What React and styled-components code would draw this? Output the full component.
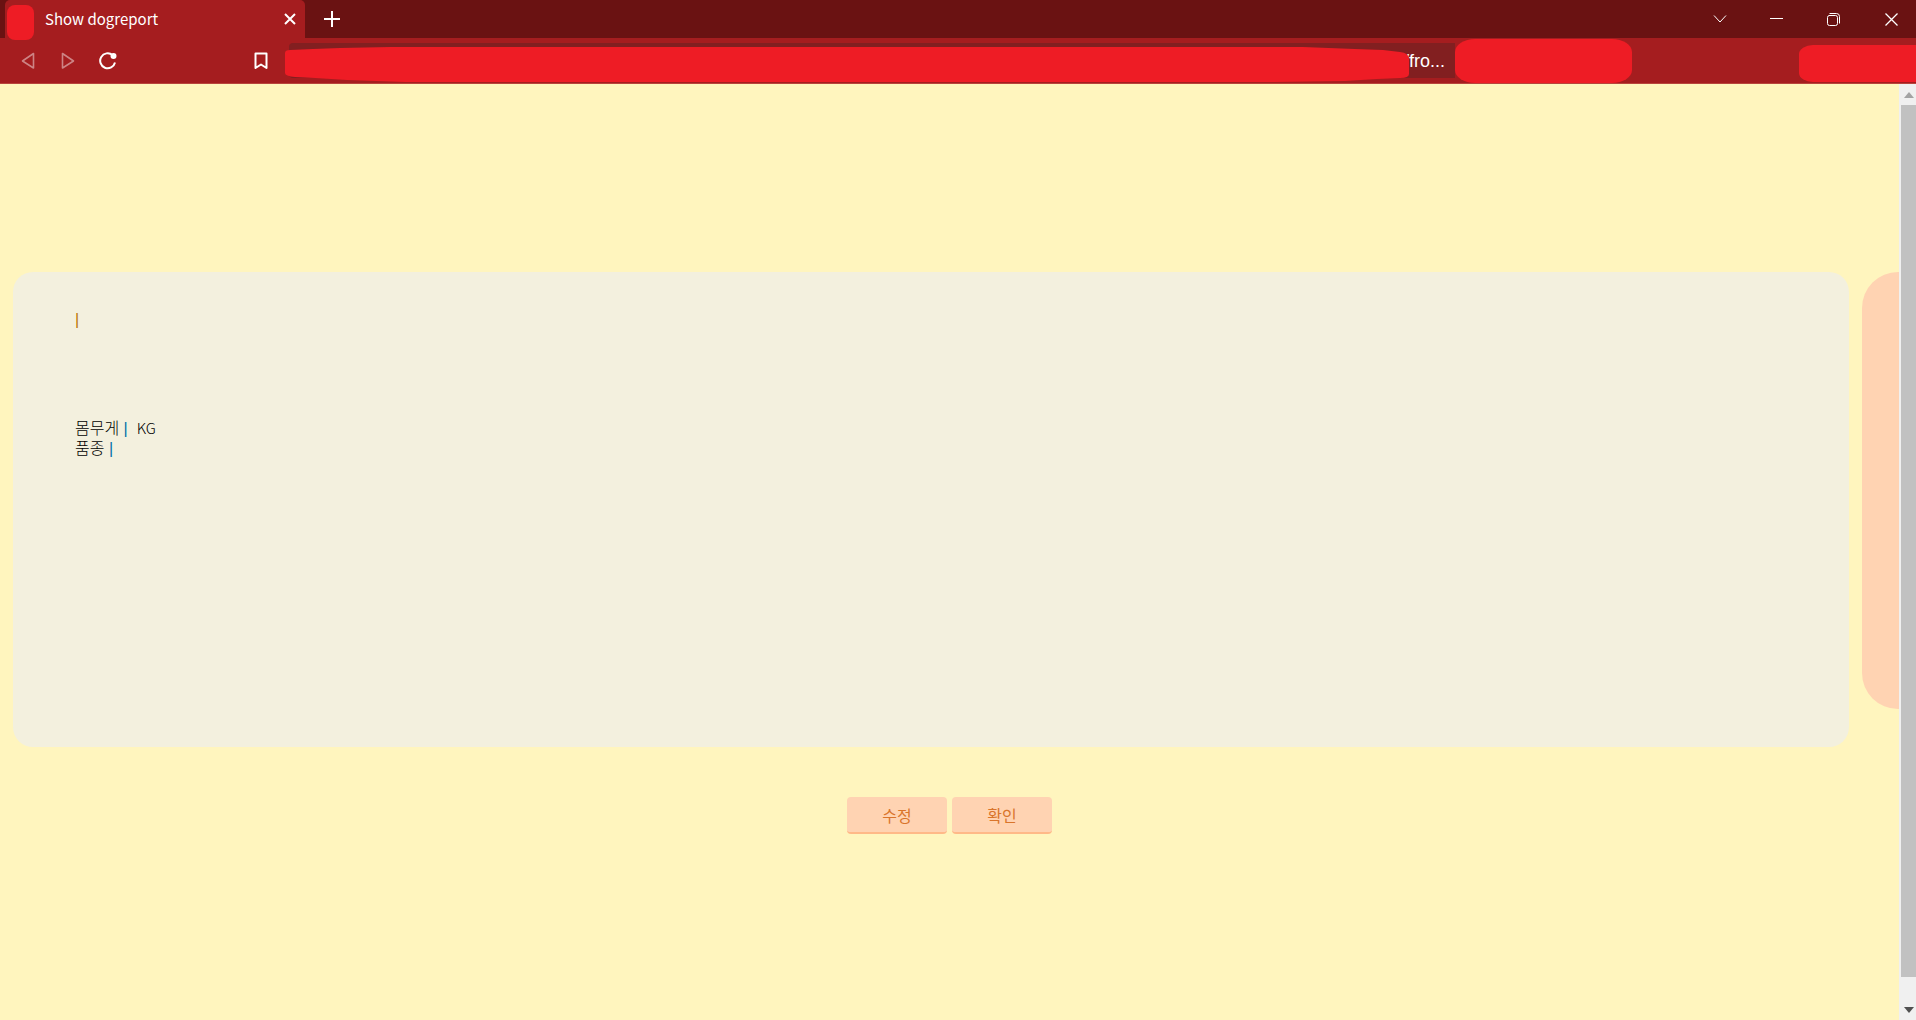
import React from "react";
import styled, { createGlobalStyle } from "styled-components";

const GlobalStyle = createGlobalStyle`
  * { box-sizing: border-box; }
  body { margin: 0; overflow: hidden; font-family: "Noto Sans CJK KR", "Noto Sans", sans-serif; }
  button { font: inherit; border: 0; padding: 0; background: none; color: inherit; cursor: pointer; }
`;

const Window = styled.div`
  display: flex;
  flex-direction: column;
  height: 100vh;
  background: #fff5be;
`;

const TitleBar = styled.header`
  display: flex;
  flex: none;
  height: 38px;
  padding-left: 5px;
  background: #6a1212;
  color: #fff;
`;

const Tab = styled.div`
  position: relative;
  display: flex;
  align-items: center;
  justify-content: space-between;
  width: 300px;
  padding: 0 5px 1px 40px;
  border-radius: 5px 5px 0 0;
  background: #a51d1f;
`;

const TabIcon = styled.span`
  position: absolute;
  z-index: 2;
  left: 2px;
  top: 5px;
  width: 27px;
  height: 35px;
  border-radius: 8px;
  background: #ee1c25;
`;

const TabTitle = styled.span`
  font-size: 15px;
  line-height: 20px;
`;

const IconButton = styled.button`
  display: flex;
  align-items: center;
  justify-content: center;
  flex: none;
  width: ${(p) => p.$width}px;
  height: 38px;
  opacity: ${(p) => (p.$dim ? 0.45 : 1)};
`;

const WindowControls = styled.div`
  display: flex;
  margin-left: auto;
`;

const Toolbar = styled.nav`
  display: flex;
  align-items: center;
  flex: none;
  height: 46px;
  padding-left: 8px;
  border-bottom: 1px solid #b8443c;
  background: #a51d1f;
  color: #fff;
`;

const BookmarkSlot = styled.div`
  margin-left: 112px;
  margin-right: 8px;
`;

const Address = styled.div`
  position: relative;
  display: flex;
  flex: 1;
  align-items: center;
  justify-content: flex-end;
  height: 35px;
  padding-right: 10px;
  border-radius: 4px 0 0 4px;
  background: #821f20;
  font-family: "Liberation Sans", sans-serif;
  font-size: 18px;
  line-height: 24px;
`;

const Scribble = styled.svg`
  position: absolute;
  left: -4px;
  top: 4px;
  width: calc(100% - 42px);
  height: 35px;
`;

const Masked = styled.span`
  flex: none;
  align-self: ${(p) => (p.$low ? "flex-end" : "flex-start")};
  width: ${(p) => p.$width}px;
  height: ${(p) => p.$height}px;
  margin: 1px 0 1px ${(p) => p.$gap || 0}px;
  border-radius: ${(p) => p.$radius};
  background: #ee1c25;
`;

const Viewport = styled.div`
  display: flex;
  flex: 1;
  min-height: 0;
`;

const Page = styled.main`
  flex: 1;
  min-width: 0;
  overflow: hidden;
  padding-top: 188px;
`;

const Panels = styled.div`
  display: flex;
  align-items: flex-start;
  gap: 13px;
  padding-left: 13px;
`;

const Card = styled.section`
  flex: 0 0 calc(100% - 50px);
  min-height: 475px;
  padding: 38px 62px;
  border-radius: 20px;
  background: #f3f0de;
  color: #000;
  font-family: "Liberation Sans", "Noto Sans CJK KR", sans-serif;
  font-size: 16px;
  font-weight: 300;
  line-height: 20px;
`;

const NextCard = styled.aside`
  flex: 1;
  height: 437px;
  border-radius: 36px 0 0 36px;
  background: #ffd3b2;
`;

const Name = styled.h1`
  margin: 0 0 88px;
  color: #b87400;
  font-size: 16px;
  font-weight: 400;
  line-height: 20px;
`;

const Field = styled.p`
  margin: 0;
  white-space: pre;
`;

const Bar = styled.span`
  color: #0070a8;
`;

const Unit = styled.span`
  font-family: "Noto Sans CJK KR", sans-serif;
  font-size: 15px;
`;

const Actions = styled.div`
  display: flex;
  justify-content: center;
  gap: 5px;
  margin-top: 50px;
`;

const ActionButton = styled.button`
  && {
    width: 100px;
    height: 37px;
    border-bottom: 2px solid #ffb988;
    border-radius: 4px;
    background: #ffd3b2;
    color: #d9752b;
    font-size: 16px;
    line-height: 20px;
  }
`;

const Scrollbar = styled.div`
  display: flex;
  flex: none;
  flex-direction: column;
  width: 17px;
  padding-left: 2px;
  background: #f0f0f0;
`;

const ScrollArrow = styled.button`
  && {
    display: flex;
    align-items: center;
    justify-content: center;
    flex: none;
    height: 21px;
    padding-left: 1px;
    color: ${(p) => (p.$active ? "#505050" : "#a3a3a3")};
  }
`;

const Thumb = styled.div`
  flex: 1;
  margin-bottom: 22px;
  background: #c1c1c1;
`;

const Icon = ({ w, h, d, stroke = 1, fill = "none", children }) => (
  <svg width={w} height={h} viewBox={`0 0 ${w} ${h}`} fill={fill} stroke="currentColor" strokeWidth={stroke} aria-hidden="true">
    <path d={d} strokeLinejoin="round" />
    {children}
  </svg>
);

export default function App() {
  return (
    <Window>
      <GlobalStyle />
      <TitleBar>
        <Tab>
          <TabIcon />
          <TabTitle>Show dogreport</TabTitle>
          <IconButton $width={20} aria-label="Close tab">
            <Icon w={12} h={12} stroke={2} d="M1 1L11 11M11 1L1 11" />
          </IconButton>
        </Tab>
        <IconButton $width={54} aria-label="New tab">
          <Icon w={16} h={16} stroke={2} d="M8 0V16M0 8H16" />
        </IconButton>
        <WindowControls>
          <IconButton $width={67} aria-label="Tab list">
            <Icon w={14} h={8} d="M1 .5L7 7L13 .5" />
          </IconButton>
          <IconButton $width={47} aria-label="Minimize">
            <Icon w={13} h={2} d="M0 .5H13" />
          </IconButton>
          <IconButton $width={67} aria-label="Restore">
            <Icon w={13} h={13} d="M2 2.500H8.500Q10.500 2.500 10.500 4.500V10.500Q10.500 12.500 8.500 12.500H2.500Q.5 12.500 .5 10.500V4.500Q.5 2.500 2.500 2.500M2.500 .5H9.500Q12.500 .5 12.500 3.500V10.500" />
          </IconButton>
          <IconButton $width={49} aria-label="Close window">
            <Icon w={13} h={13} stroke={1.3} d="M.5 .5L12.500 12.500M12.500 .5L.5 12.500" />
          </IconButton>
        </WindowControls>
      </TitleBar>
      <Toolbar>
        <IconButton $width={40} $dim aria-label="Back">
          <Icon w={14} h={18} stroke={1.6} d="M12.500 1.500V16L1.500 9Z" />
        </IconButton>
        <IconButton $width={40} $dim aria-label="Forward">
          <Icon w={14} h={18} stroke={1.6} d="M1.500 1.500V16L12.500 9Z" />
        </IconButton>
        <IconButton $width={40} aria-label="Reload">
          <Icon w={18} h={18} stroke={2} d="M13.500 3A7.500 7.500 0 1 0 16 10.500">
            <circle cx="14.500" cy="4" r="2" fill="currentColor" />
          </Icon>
        </IconButton>
        <BookmarkSlot>
          <IconButton $width={41} aria-label="Bookmark">
            <Icon w={14} h={18} stroke={2} d="M1.500 1.500H12.500V16L7 12.500L1.500 16Z" />
          </IconButton>
        </BookmarkSlot>
        <Address>
          <Scribble viewBox="0 0 1124 35" preserveAspectRatio="none" aria-hidden="true">
            <path
              fill="#ee1c25"
              d="M0 6Q0 3 5 3L28 2L55 1L105 0H1018L1070 2L1098 3L1115 5Q1124 6 1124 12V27Q1124 31 1115 31L1092 32L1060 34L990 35H120L62 33L30 31L10 30Q0 29 0 26Z"
            />
          </Scribble>
          <span>/fro...</span>
        </Address>
        <Masked $width={177} $height={44} $radius="20px / 13px" />
        <Masked $width={117} $height={37} $gap={167} $radius="14px 0 0 14px / 9px 0 0 9px" $low />
      </Toolbar>
      <Viewport>
        <Page>
          <Panels>
            <Card>
              <Name>|</Name>
              <Field>몸무게 <Bar>|</Bar>  <Unit>KG</Unit></Field>
              <Field>품종 <Bar>|</Bar></Field>
            </Card>
            <NextCard />
          </Panels>
          <Actions>
            <ActionButton type="button">수정</ActionButton>
            <ActionButton type="button">확인</ActionButton>
          </Actions>
        </Page>
        <Scrollbar>
          <ScrollArrow aria-label="Scroll up">
            <Icon w={10} h={6} stroke={0} fill="currentColor" d="M0 6L5 0L10 6Z" />
          </ScrollArrow>
          <Thumb />
          <ScrollArrow $active aria-label="Scroll down">
            <Icon w={10} h={6} stroke={0} fill="currentColor" d="M0 0L5 6L10 0Z" />
          </ScrollArrow>
        </Scrollbar>
      </Viewport>
    </Window>
  );
}
